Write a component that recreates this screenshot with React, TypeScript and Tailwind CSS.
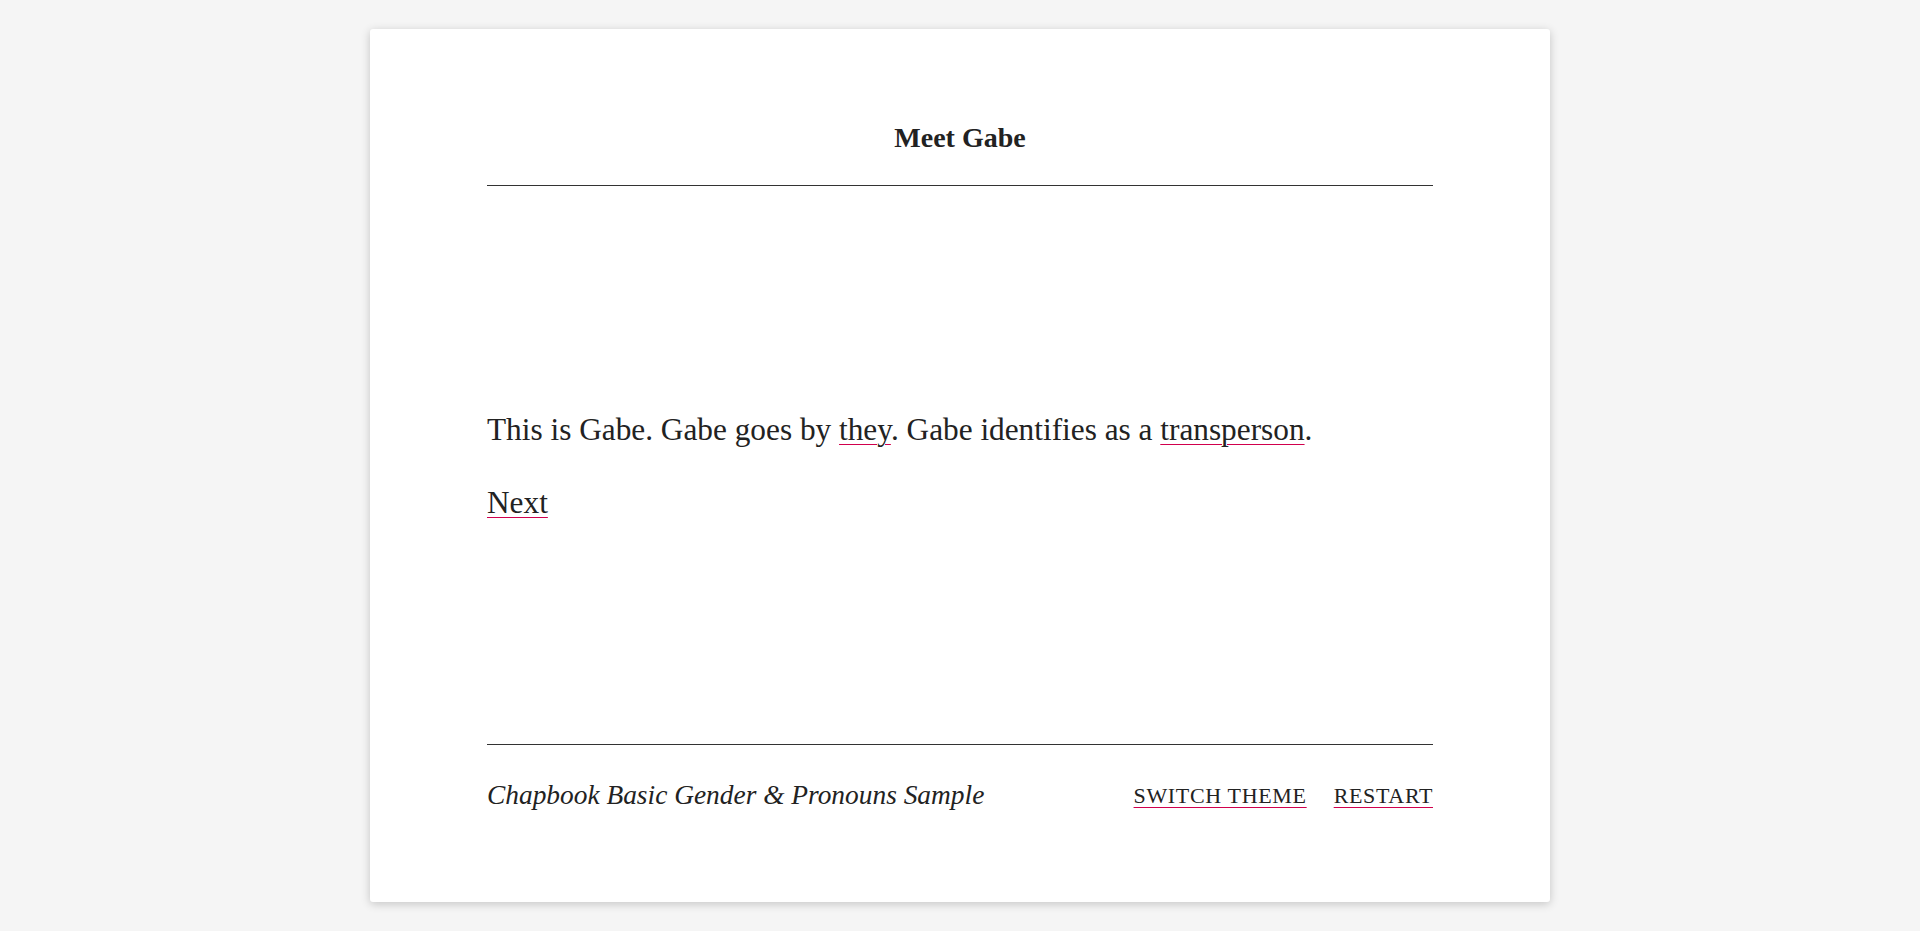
import React from "react";

export default function App() {
  const serif = { fontFamily: '"Liberation Serif", "DejaVu Serif", serif' };
  const link =
    "underline decoration-[#d1004d] decoration-1 underline-offset-[4px] cursor-pointer";
  return (
    <div className="min-h-[931px] bg-[#f5f5f5] py-[29px]" style={serif}>
      <div className="mx-auto flex h-[873px] w-[1180px] flex-col rounded-[3px] bg-white px-[117px] text-[#222] shadow-[0_2px_10px_rgba(0,0,0,0.2)]">
        <header className="flex h-[157px] items-end justify-center border-b border-[#333] pb-[33px]">
          <h1 className="text-[28px] font-bold leading-none">Meet Gabe</h1>
        </header>
        <main className="flex flex-1 flex-col justify-center gap-[37px] pt-[2px] text-[31.3px] leading-[36px]">
          <p>
            This is Gabe. Gabe goes by <span className={link}>they</span>. Gabe
            identifies as a <span className={link}>transperson</span>.
          </p>
          <p>
            <span className={link}>Next</span>
          </p>
        </main>
        <footer className="flex h-[158px] items-start justify-between border-t border-[#333] pt-[35px]">
          <div className="text-[27.4px] italic leading-[30px]">
            Chapbook Basic Gender &amp; Pronouns Sample
          </div>
          <div className="flex gap-[27px] pt-[3px] text-[22px] uppercase leading-[26px] tracking-[0.03em]">
            <span className={link}>Switch Theme</span>
            <span className={link}>Restart</span>
          </div>
        </footer>
      </div>
    </div>
  );
}
